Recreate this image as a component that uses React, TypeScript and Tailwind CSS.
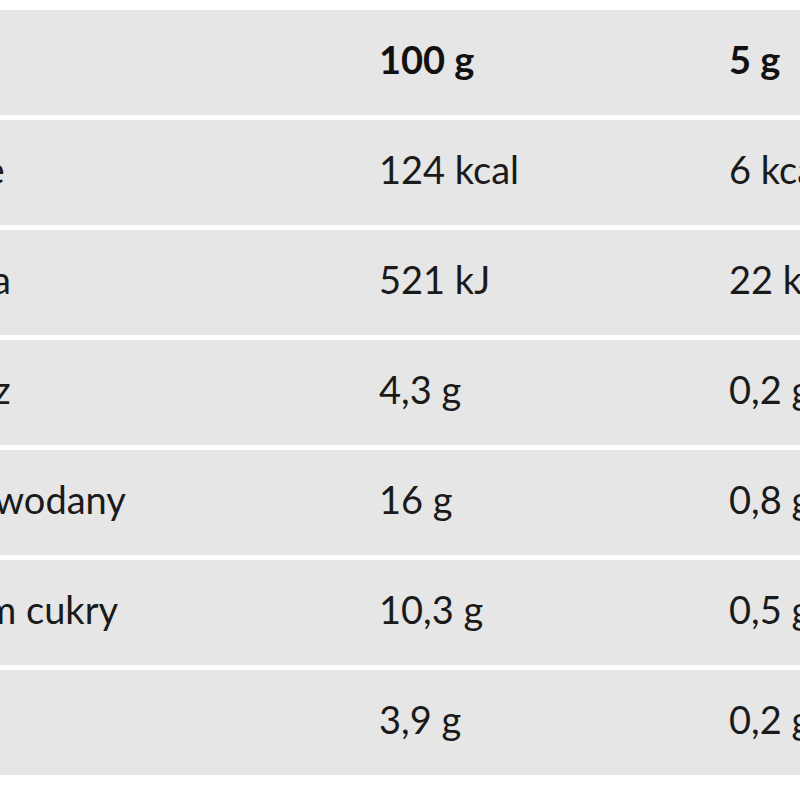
import React from "react";

const ROWS = [
  { label: "Kalorie", per100: "124 kcal", perServing: "6 kcal" },
  { label: "Energia", per100: "521 kJ", perServing: "22 kJ" },
  { label: "Tłuszcz", per100: "4,3 g", perServing: "0,2 g" },
  { label: "Węglowodany", per100: "16 g", perServing: "0,8 g" },
  { label: "w tym cukry", per100: "10,3 g", perServing: "0,5 g", sub: true },
  { label: "Białko", per100: "3,9 g", perServing: "0,2 g" },
];

export default function App() {
  return (
    <div className="w-[800px] h-[800px] overflow-hidden bg-white pt-[10px] font-['Lato',sans-serif] text-[#1a1a1a]">
      <div className="ml-[-113px] w-[1120px] flex flex-col gap-[5px]">
        {/* header */}
        <div className="grid grid-cols-[492px_350px_278px] items-center h-[105px] pb-[6px] bg-[#e6e6e6] text-[38px] font-bold text-[#111]">
          <div />
          <div>100 g</div>
          <div>5 g</div>
        </div>
        {ROWS.map((r) => (
          <div
            key={r.label}
            className="grid grid-cols-[492px_350px_278px] items-center h-[105px] pb-[6px] bg-[#e6e6e6] text-[38px] whitespace-nowrap"
          >
            <div className={r.sub ? "pl-[26px]" : ""}>{r.label}</div>
            <div>{r.per100}</div>
            <div>{r.perServing}</div>
          </div>
        ))}
      </div>
    </div>
  );
}
